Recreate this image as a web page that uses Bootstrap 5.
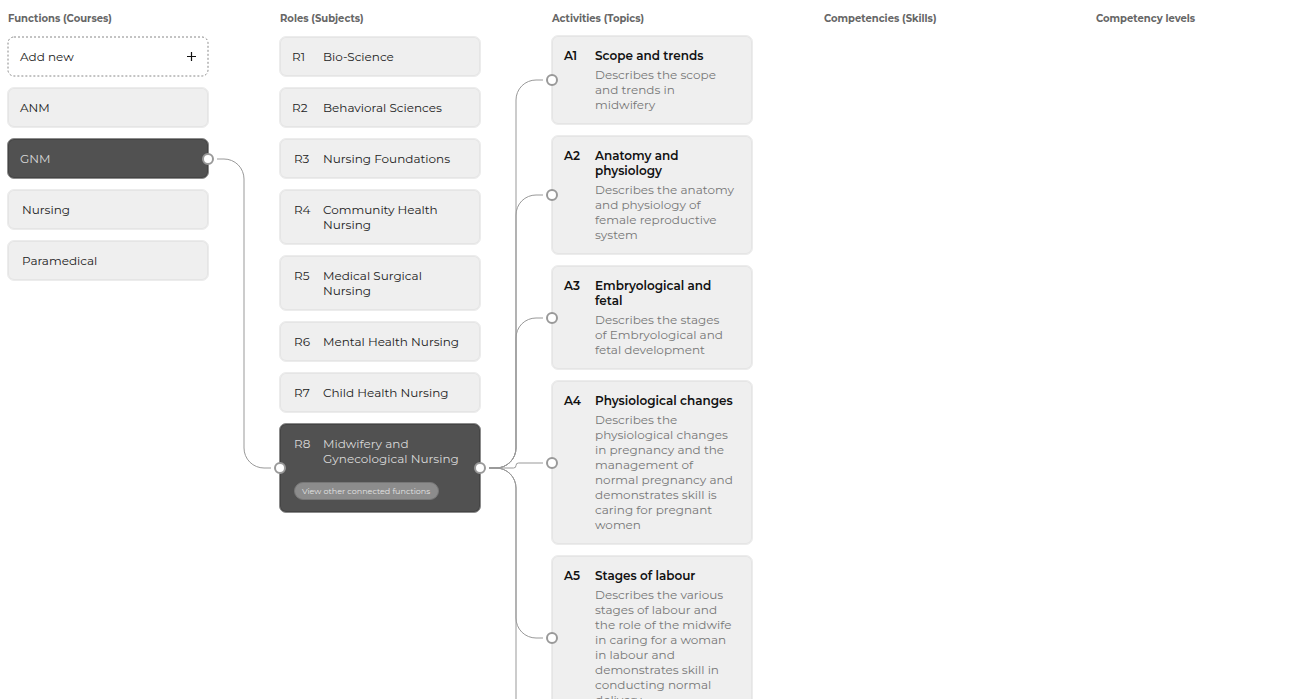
<!DOCTYPE html>
<html lang="en">
<head>
<meta charset="utf-8">
<meta name="viewport" content="width=device-width, initial-scale=1">
<title>Functions and roles</title>
<link href="https://cdn.jsdelivr.net/npm/bootstrap@5.3.0/dist/css/bootstrap.min.css" rel="stylesheet">
<style>
  body { font-family: Montserrat, Inter, sans-serif; font-size: 12px; line-height: 15px; color: #222; background: #fff; }
  .board { height: 100vh; padding: 11px 0 0 7px; gap: 70px; }
  .lane { flex: 0 0 202px; gap: 10px; }
  .lane-title { font-size: 10px; line-height: 15px; font-weight: 700; color: #666; padding-left: 1px; margin: 0; white-space: nowrap; }
  .lane-topics .lane-title { margin-bottom: -1px; }
  .node { position: relative; display: block; width: 100%; padding: 12px; border: 1px solid #ececec; border-radius: 7px; background: #efefef; box-shadow: inset 0 0 0 1px #e5e5e5; color: inherit; text-align: left; }
  .node-active { background: #515151; border-color: #8c8c8c; box-shadow: inset 0 0 0 1px #444; color: #d8d8d8; }
  .node-new { background: transparent; border-color: transparent; box-shadow: none; }
  .node-new .outline { position: absolute; inset: -1px; width: calc(100% + 2px); height: calc(100% + 2px); }
  .node-new rect { x: 1px; y: 1px; width: calc(100% - 2px); height: calc(100% - 2px); }
  .node-new { padding-right: 11px; }
  .inset { padding-left: 14px; }
  .code { flex: 0 0 31px; }
  .inset .code { flex-basis: 29px; }
  .label { white-space: nowrap; }
  .strong { font-weight: 600; color: #111; }
  .about { margin-top: 4px; color: #777; }
  .pill { display: block; height: 18px; margin-top: 16px; padding: 0 8px 0 7px; border: 1px solid #777; border-radius: 9px; background: #8c8c8c; color: #e4e4e4; font-size: 8px; line-height: 16px; white-space: nowrap; }
  .port { position: absolute; top: 50%; width: 12px; height: 12px; margin-top: -6px; border: 2px solid #999; border-radius: 50%; background: #fff; }
  .port-in { left: -6px; }
  .port-out { right: -6px; }
  .links { position: absolute; top: 0; left: 0; width: 100%; height: 100%; pointer-events: none; }
</style>
</head>
<body>
<main class="board d-flex align-items-start position-relative overflow-hidden">
  <svg class="links" fill="none" stroke="#999" aria-hidden="true">
    <path d="M217 159H224A20 20 0 0 1 244 179V448A20 20 0 0 0 264 468H271"/>
    <path d="M489 468H496A20 20 0 0 0 516 448V100A20 20 0 0 1 536 80H543"/>
    <path d="M489 468H496A20 20 0 0 0 516 448V215A20 20 0 0 1 536 195H543"/>
    <path d="M489 468H496A20 20 0 0 0 516 448V338A20 20 0 0 1 536 318H543"/>
    <path d="M489 468H513.5A2.5 2.5 0 0 0 516 465.5A2.5 2.5 0 0 1 518.5 463H543"/>
    <path d="M489 468H496A20 20 0 0 1 516 488V618A20 20 0 0 0 536 638H543"/>
    <path d="M489 468H496A20 20 0 0 1 516 488V2000"/>
  </svg>

  <section class="lane d-flex flex-column">
    <h2 class="lane-title">Functions (Courses)</h2>
    <button type="button" class="node node-new">
      <svg class="outline" fill="none" stroke="#888" stroke-dasharray="2 2" aria-hidden="true"><rect rx="6"/></svg>
      <span class="d-flex justify-content-between align-items-center">Add new
        <svg width="11" height="11" viewBox="0 0 11 11" stroke="#111" stroke-width="1.2" aria-hidden="true"><path d="M1 5.5H10M5.5 1V10"/></svg>
      </span>
    </button>
    <button type="button" class="node">ANM</button>
    <button type="button" class="node node-active">GNM<span class="port port-out"></span></button>
    <button type="button" class="node inset">Nursing</button>
    <button type="button" class="node inset">Paramedical</button>
  </section>

  <section class="lane d-flex flex-column">
    <h2 class="lane-title">Roles (Subjects)</h2>
    <button type="button" class="node"><span class="d-flex"><span class="code">R1</span><span class="label">Bio-Science</span></span></button>
    <button type="button" class="node"><span class="d-flex"><span class="code">R2</span><span class="label">Behavioral Sciences</span></span></button>
    <button type="button" class="node inset"><span class="d-flex"><span class="code">R3</span><span class="label">Nursing Foundations</span></span></button>
    <button type="button" class="node inset"><span class="d-flex"><span class="code">R4</span><span class="label">Community Health<br>Nursing</span></span></button>
    <button type="button" class="node inset"><span class="d-flex"><span class="code">R5</span><span class="label">Medical Surgical<br>Nursing</span></span></button>
    <button type="button" class="node inset"><span class="d-flex"><span class="code">R6</span><span class="label">Mental Health Nursing</span></span></button>
    <button type="button" class="node inset"><span class="d-flex"><span class="code">R7</span><span class="label">Child Health Nursing</span></span></button>
    <div class="node node-active inset">
      <div class="d-flex"><span class="code">R8</span><span class="label">Midwifery and<br>Gynecological Nursing</span></div>
      <button type="button" class="pill">View other connected functions</button>
      <span class="port port-in"></span><span class="port port-out"></span>
    </div>
  </section>

  <section class="lane lane-topics d-flex flex-column">
    <h2 class="lane-title">Activities (Topics)</h2>
    <article class="node d-flex">
      <span class="code strong">A1</span>
      <div class="label"><div class="strong">Scope and trends</div><div class="about">Describes the scope<br>and trends in<br>midwifery</div></div>
      <span class="port port-in"></span>
    </article>
    <article class="node d-flex">
      <span class="code strong">A2</span>
      <div class="label"><div class="strong">Anatomy and<br>physiology</div><div class="about">Describes the anatomy<br>and physiology of<br>female reproductive<br>system</div></div>
      <span class="port port-in"></span>
    </article>
    <article class="node d-flex">
      <span class="code strong">A3</span>
      <div class="label"><div class="strong">Embryological and<br>fetal</div><div class="about">Describes the stages<br>of Embryological and<br>fetal development</div></div>
      <span class="port port-in"></span>
    </article>
    <article class="node d-flex">
      <span class="code strong">A4</span>
      <div class="label"><div class="strong">Physiological changes</div><div class="about">Describes the<br>physiological changes<br>in pregnancy and the<br>management of<br>normal pregnancy and<br>demonstrates skill is<br>caring for pregnant<br>women</div></div>
      <span class="port port-in"></span>
    </article>
    <article class="node d-flex">
      <span class="code strong">A5</span>
      <div class="label"><div class="strong">Stages of labour</div><div class="about">Describes the various<br>stages of labour and<br>the role of the midwife<br>in caring for a woman<br>in labour and<br>demonstrates skill in<br>conducting normal<br>delivery</div></div>
      <span class="port port-in"></span>
    </article>
  </section>

  <section class="lane"><h2 class="lane-title">Competencies (Skills)</h2></section>
  <section class="lane"><h2 class="lane-title">Competency levels</h2></section>
</main>
<script src="https://cdn.jsdelivr.net/npm/bootstrap@5.3.0/dist/js/bootstrap.bundle.min.js"></script>
</body>
</html>
